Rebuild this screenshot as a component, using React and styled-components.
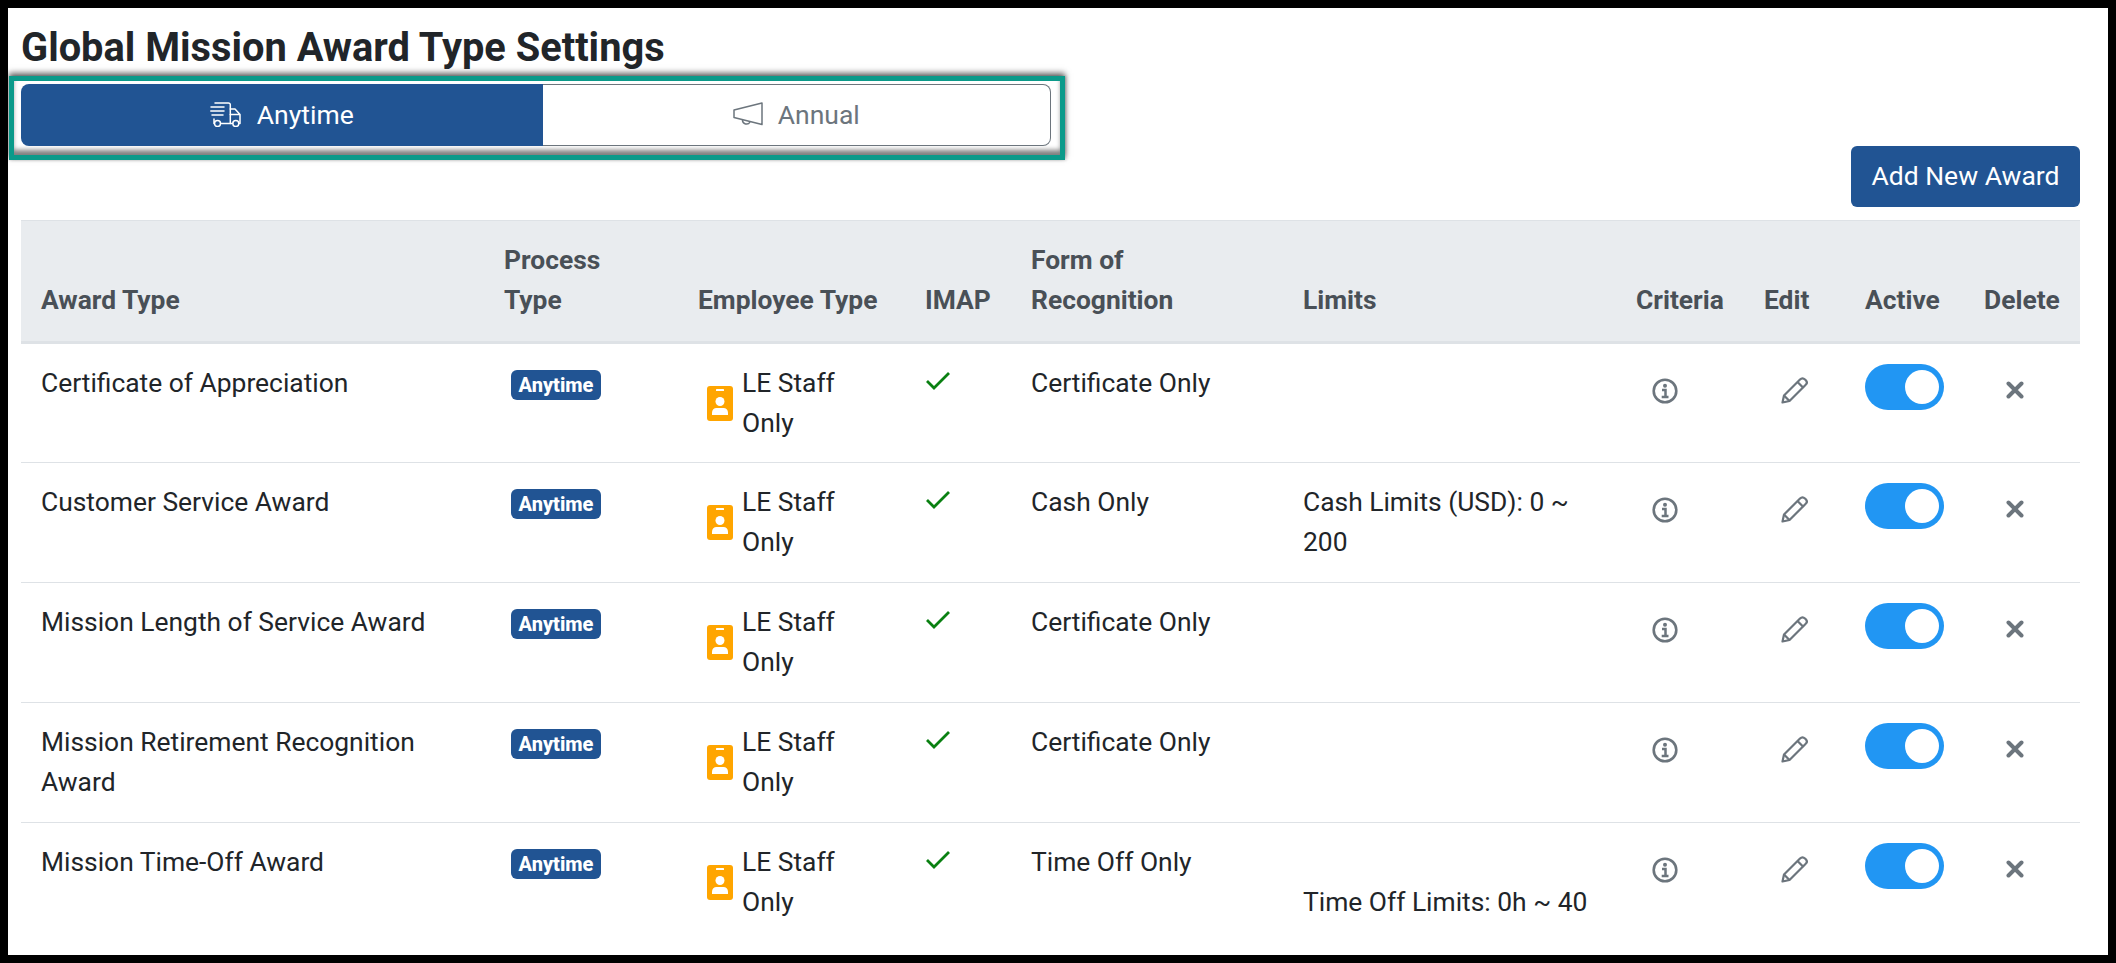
import React from "react";
import styled, { createGlobalStyle } from "styled-components";

const Global = createGlobalStyle`
  html, body { margin: 0; padding: 0; height: 100%; overflow: hidden; background: #000; }
  #root { height: 100%; }
`;

const Frame = styled.div`
  box-sizing: border-box;
  height: 963px;
  border: 8px solid #000;
  background: #fff;
  overflow: hidden;
  padding: 0 28px 0 13px;
  font-family: Roboto, "Liberation Sans", sans-serif;
  color: #212529;
`;

const Title = styled.h1`
  margin: 0;
  padding-top: 18px;
  font-size: 39.800px;
  line-height: 44px;
  font-weight: 700;
  height: 50px;
  box-sizing: content-box;
  color: #212529;
`;

const Highlight = styled.div`
  box-sizing: border-box;
  width: 1056px;
  height: 84px;
  margin-left: -12px;
  border: 5px solid #0b9a8a;
  padding: 3px 9px 0 7px;
  box-shadow: 0 -3px 6px rgba(0, 0, 0, 0.6), 1px 0 3px rgba(0, 0, 0, 0.2), inset 0 -6px 5px -1px rgba(0, 0, 0, 0.5);
`;

const Tabs = styled.div`
  display: flex;
  height: 62px;
`;

const Tab = styled.div`
  box-sizing: border-box;
  width: ${(p) => p.$w}px;
  display: flex;
  align-items: center;
  justify-content: center;
  gap: 15px;
  padding-bottom: 2px;
  font-size: 26.500px;
  color: ${(p) => (p.$active ? "#fff" : "#6c757d")};
  background: ${(p) => (p.$active ? "#215493" : "#fff")};
  border: ${(p) => (p.$active ? "none" : "1.5px solid #6c757d")};
  border-left: none;
  border-radius: ${(p) => (p.$active ? "8px 0 0 8px" : "0 8px 8px 0")};
`;

const ActionRow = styled.div`
  display: flex;
  justify-content: flex-end;
  height: 74px;
  margin-top: -14px;
`;

const AddButton = styled.button`
  width: 229px;
  height: 61px;
  border: none;
  border-radius: 6px;
  background: #215493;
  color: #fff;
  font: 400 26.500px/1.5 Roboto, sans-serif;
  padding: 0 0 2px;
`;

const Table = styled.table`
  table-layout: fixed;
  border-collapse: collapse;
  width: 2059px;
  font-size: 26.400px;
  line-height: 40px;
`;

const Th = styled.th`
  box-sizing: border-box;
  width: ${(p) => p.$w}px;
  height: 121px;
  padding: 19px 0 21px 20px;
  text-align: left;
  vertical-align: bottom;
  font-weight: 700;
  color: #495057;
  background: #e9ecef;
  border-top: 1px solid #dee2e6;
  border-bottom: 3px solid #dee2e6;
`;

const Row = styled.tr`
  height: 120px;
  border-bottom: 1.5px solid #dee2e6;
  &:last-child { border-bottom: none; }
`;

const Td = styled.td`
  box-sizing: border-box;
  padding: 19px 0 19px 20px;
  vertical-align: top;
`;

const Badge = styled.span`
  display: flex;
  align-items: center;
  justify-content: center;
  width: 90px;
  height: 30px;
  margin: 7px 0 0 7px;
  border-radius: 6px;
  background: #215493;
  color: #fff;
  font-size: 20px;
  font-weight: 800;
  line-height: 1;
`;

const Employee = styled.div`
  display: flex;
  align-items: center;
  gap: 9px;
  margin-left: 9px;
`;

const IconCell = styled.div`
  display: flex;
  padding: ${(p) => p.$top}px 0 0 ${(p) => p.$left}px;
`;

const Toggle = styled.div`
  box-sizing: border-box;
  width: 79px;
  height: 46px;
  margin-top: 1px;
  border-radius: 23px;
  background: #2196f3;
  display: flex;
  align-items: center;
  justify-content: flex-end;
  padding-right: 5px;
`;

const Knob = styled.div`
  width: 34px;
  height: 34px;
  border-radius: 50%;
  background: #fff;
`;

const TruckIcon = () => (
  <svg width="32" height="25" viewBox="0 0 32 25" fill="none" stroke="currentColor" strokeWidth="1.500" strokeLinecap="round" strokeLinejoin="round">
    <path d="M5 1H18.500a1.800 1.800 0 0 1 1.800 1.800V21.500H11M4 17V21.500" />
    <path d="M1 5H14M0.800 9H14M2 13H13" />
    <path d="M20.300 7H25L30 12.500V21.500H29M20.300 12.500H30M20.300 21.500H22.500" />
    <circle cx="7.500" cy="21.500" r="3" />
    <circle cx="25.800" cy="21.500" r="3" />
  </svg>
);

const HornIcon = () => (
  <svg width="30" height="24" viewBox="0 0 30 24" fill="none" stroke="currentColor" strokeWidth="1.500" strokeLinejoin="round">
    <path d="M1 8V15.500L29 22.500V1Z" />
    <path d="M9.500 18A4 4 0 0 0 17 20" />
  </svg>
);

const InfoIcon = () => (
  <svg width="26" height="26" viewBox="0 0 26 26" fill="none" stroke="#6c757d">
    <circle cx="13" cy="13" r="11.300" strokeWidth="2.600" />
    <circle cx="13" cy="7.800" r="2" fill="#6c757d" stroke="none" />
    <path d="M10 12H13.500V18.500M9.700 19H16.500" strokeWidth="2.500" />
  </svg>
);

const PencilIcon = () => (
  <svg width="27" height="28" viewBox="0 0 27 28" fill="none" stroke="#6c757d" strokeWidth="2.200" strokeLinejoin="round">
    <path d="M1.500 26.500L3 19.500L19 3.500Q21.500 1 24 3.500L25 4.500Q27 7 24.500 9L8.500 25Z" />
    <path d="M16.500 6L22.500 12M3 19.500L8.500 25" />
  </svg>
);

const CrossIcon = () => (
  <svg width="18" height="18" viewBox="0 0 18 18" stroke="#6c757d" strokeWidth="4" strokeLinecap="round">
    <path d="M2.500 2.500L15.500 15.500M15.500 2.500L2.500 15.500" />
  </svg>
);

const CheckIcon = () => (
  <svg width="24" height="20" viewBox="0 0 24 20" fill="none" stroke="#0a8012" strokeWidth="2.800">
    <path d="M1 10L8 17L23 2" />
  </svg>
);

const IdIcon = () => (
  <svg width="26" height="35" viewBox="0 0 26 35" style={{ flex: "none" }}>
    <rect width="26" height="35" rx="3" fill="#ffa500" />
    <rect x="9" y="3" width="8" height="2" fill="#fff" rx="0.500" />
    <circle cx="13" cy="15.500" r="4.500" fill="#fff" />
    <path d="M5 29V26.500C5 24 7 22 9.500 22H16.500C19 22 21 24 21 26.500V29Z" fill="#fff" />
  </svg>
);

const cols = [463, 194, 227, 106, 272, 333, 128, 101, 119, 116];
const heads = ["Award Type", <>Process<br />Type</>, "Employee Type", "IMAP", <>Form of<br />Recognition</>, "Limits", "Criteria", "Edit", "Active", "Delete"];

const rows = [
  { name: "Certificate of Appreciation", form: "Certificate Only" },
  { name: "Customer Service Award", form: "Cash Only", limits: "Cash Limits (USD): 0 ~ 200" },
  { name: "Mission Length of Service Award", form: "Certificate Only" },
  { name: "Mission Retirement Recognition Award", form: "Certificate Only" },
  { name: "Mission Time-Off Award", form: "Time Off Only", limits: <><br />Time Off Limits: 0h ~ 40</> },
];

export default function App() {
  return (
    <>
      <Global />
      <Frame>
        <Title>Global Mission Award Type Settings</Title>
        <Highlight>
          <Tabs>
            <Tab $active $w={522}><TruckIcon />Anytime</Tab>
            <Tab $w={509}><HornIcon />Annual</Tab>
          </Tabs>
        </Highlight>
        <ActionRow><AddButton>Add New Award</AddButton></ActionRow>
        <Table>
          <thead>
            <tr>{heads.map((h, i) => <Th key={i} $w={cols[i]}>{h}</Th>)}</tr>
          </thead>
          <tbody>
            {rows.map((r) => (
              <Row key={r.name}>
                <Td>{r.name}</Td>
                <Td><Badge>Anytime</Badge></Td>
                <Td><Employee><IdIcon /><span>LE Staff<br />Only</span></Employee></Td>
                <Td><IconCell $top={8} $left={1}><CheckIcon /></IconCell></Td>
                <Td>{r.form}</Td>
                <Td>{r.limits}</Td>
                <Td><IconCell $top={15} $left={16}><InfoIcon /></IconCell></Td>
                <Td><IconCell $top={13} $left={17}><PencilIcon /></IconCell></Td>
                <Td><Toggle><Knob /></Toggle></Td>
                <Td><IconCell $top={18} $left={22}><CrossIcon /></IconCell></Td>
              </Row>
            ))}
          </tbody>
        </Table>
      </Frame>
    </>
  );
}
